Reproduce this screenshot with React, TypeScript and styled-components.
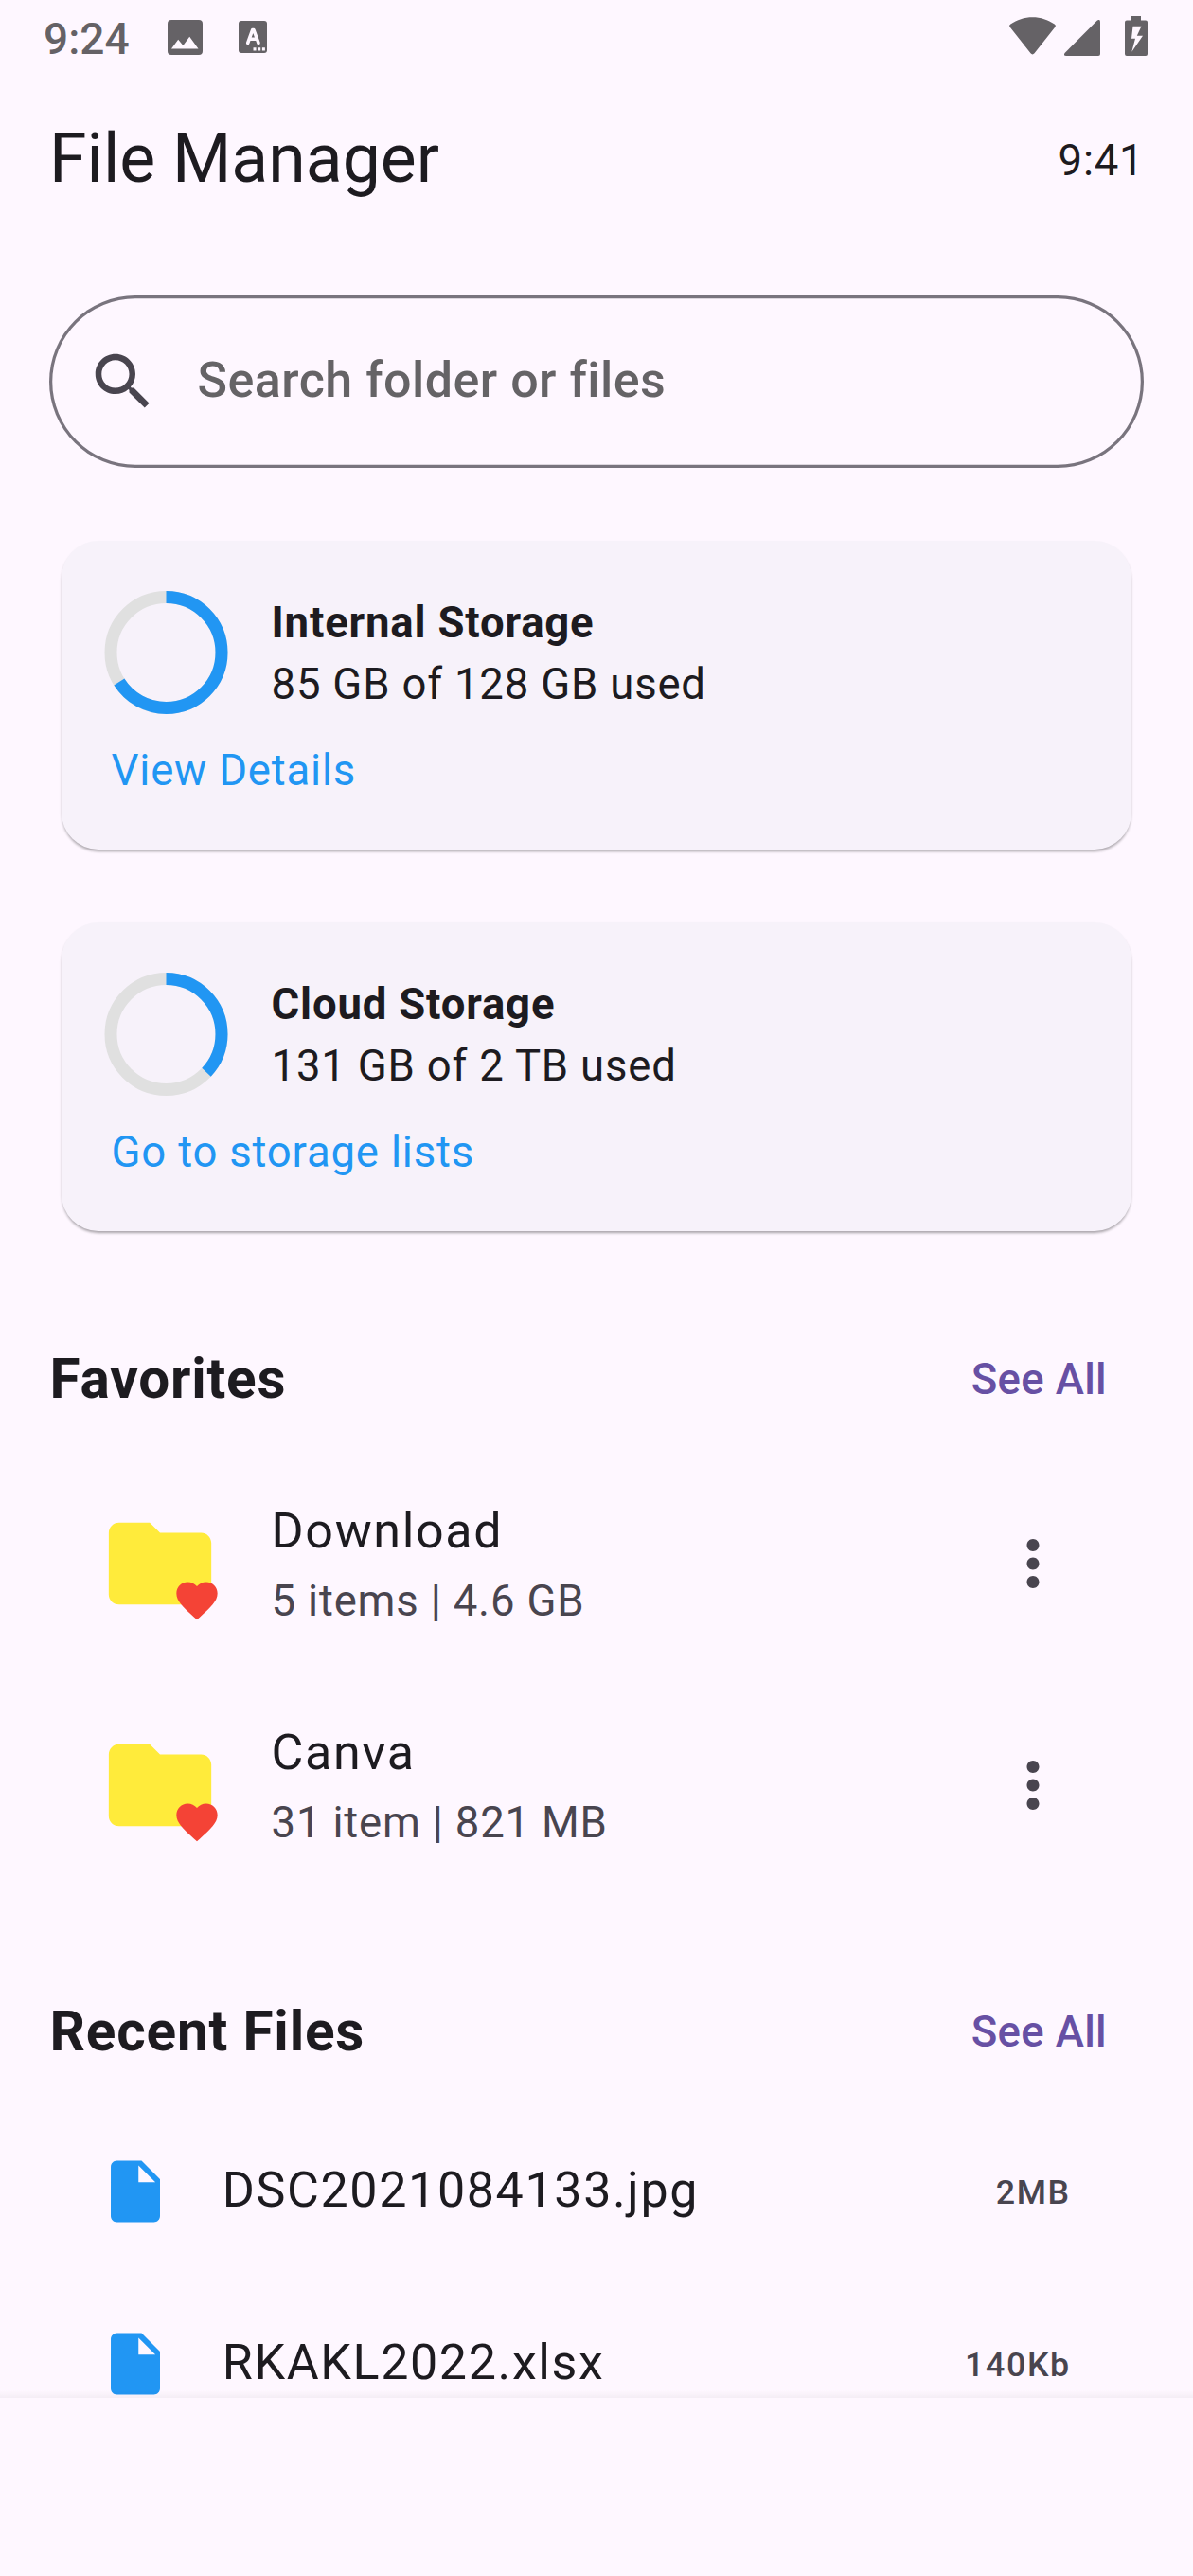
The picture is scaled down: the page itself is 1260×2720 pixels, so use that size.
import React from 'react';
import styled, { createGlobalStyle } from 'styled-components';

const GlobalStyle = createGlobalStyle`
  *, *::before, *::after { box-sizing: border-box; }
  html, body { margin: 0; padding: 0; background: #fef7ff; }
  body { font-family: Roboto, "Noto Sans", sans-serif; color: #1d1b20; }
  svg { display: block; flex: none; }
`;

const Screen = styled.div`
  width: 1260px;
  height: 2720px;
  display: flex;
  flex-direction: column;
  overflow: hidden;
  background: #fef7ff;
`;

const StatusBar = styled.header`
  height: 76px;
  flex: none;
  display: flex;
  justify-content: space-between;
  padding: 15px 48px 0 46px;
  color: #656266;
`;

const StatusGroup = styled.div`
  display: flex;
  align-items: flex-start;
`;

const Clock = styled.span`
  width: 131px;
  font-size: 46px;
  line-height: 53px;
  font-weight: 500;
`;

const StatusIcon = styled.svg<{ $top: number; $left?: number }>`
  margin-top: ${(p) => p.$top}px;
  margin-left: ${(p) => p.$left ?? 0}px;
`;

const AppBar = styled.div`
  height: 183px;
  flex: none;
  display: flex;
  align-items: center;
  justify-content: space-between;
  padding: 0 52px;
`;

const Title = styled.h1`
  margin: 0;
  font-size: 71.5px;
  line-height: 83px;
  font-weight: 400;
`;

const AppBarTime = styled.span`
  margin: 4px -0.5px 0 0;
  font-size: 45.5px;
  line-height: 53px;
  letter-spacing: 0.8125px;
`;

const Body = styled.main`
  flex: 1;
  min-height: 0;
  overflow: hidden;
  display: flex;
  flex-direction: column;
  padding: 53px 52px 0;
`;

const SearchBox = styled.label`
  height: 182px;
  flex: none;
  display: flex;
  align-items: center;
  gap: 39px;
  padding: 0 39px;
  border-radius: 91px;
  box-shadow: inset 0 0 0 3.25px #79747e;
  color: #49454f;
`;

const SearchHint = styled.span`
  margin-bottom: 3px;
  padding-left: 0.5px;
  font-size: 52px;
  line-height: 61px;
  font-weight: 500;
  letter-spacing: 0.4875px;
  color: #656366;
`;

const Cards = styled.div`
  flex: none;
  display: flex;
  flex-direction: column;
  gap: 77px;
  margin: 77px 13px 78px;
`;

const Card = styled.section`
  height: 326px;
  padding: 53px 45px 0;
  border-radius: 39px;
  background: #f7f2fa;
  box-shadow: 0 3px 3px -1px rgba(0, 0, 0, 0.26), 0 2px 3px rgba(0, 0, 0, 0.1);
`;

const CardTop = styled.div`
  display: flex;
  gap: 45px;
`;

const CardText = styled.div`
  display: flex;
  flex-direction: column;
  padding: 1px 0 0 0.5px;
`;

const CardLine = styled.span<{ $bold?: boolean }>`
  font-size: 45.5px;
  line-height: 65px;
  letter-spacing: 0.8125px;
  font-weight: ${(p) => (p.$bold ? 700 : 400)};
`;

const CardLink = styled.a`
  display: block;
  margin: 26px 0 0 7.5px;
  font-size: 45.5px;
  line-height: 65px;
  letter-spacing: 0.8125px;
  color: #2196f3;
`;

const SectionHeader = styled.div<{ $gap?: number }>`
  height: 156px;
  flex: none;
  display: flex;
  align-items: center;
  justify-content: space-between;
  margin-top: ${(p) => p.$gap ?? 0}px;
`;

const SectionTitle = styled.h2`
  margin: 0;
  padding-left: 0.5px;
  font-size: 58.5px;
  line-height: 68px;
  font-weight: 700;
  letter-spacing: 0.8125px;
`;

const SeeAll = styled.button`
  margin: 1px 0 0;
  padding: 0 39px;
  border: 0;
  background: none;
  font-family: inherit;
  font-size: 45.5px;
  line-height: 53px;
  font-weight: 500;
  letter-spacing: 0.325px;
  color: #6750a4;
`;

const FolderRow = styled.div`
  height: 234px;
  flex: none;
  display: flex;
  align-items: center;
  padding: 0 78px 0 52px;
  color: #49454f;
`;

const FolderIcon = styled.div`
  position: relative;
  flex: none;
  color: #ffeb3b;
`;

const HeartBadge = styled.svg`
  position: absolute;
  right: 0;
  bottom: 0;
  color: #f44336;
`;

const FolderText = styled.div`
  flex: 1;
  align-self: flex-start;
  display: flex;
  flex-direction: column;
  gap: 2px;
  padding: 43px 0 0 52.6px;
`;

const FolderName = styled.span`
  font-size: 52px;
  line-height: 79px;
  letter-spacing: 1.625px;
  color: #1d1b20;
`;

const FolderMeta = styled.span`
  font-size: 45.5px;
  line-height: 65px;
  letter-spacing: 0.8125px;
`;

const FileRow = styled.div`
  height: 182px;
  flex: none;
  display: flex;
  align-items: center;
  padding: 0 77.2px 0 52px;
  color: #2196f3;
`;

const FileName = styled.span`
  flex: 1;
  margin: 0 0 3px 52.8px;
  font-size: 52px;
  line-height: 61px;
  letter-spacing: 1.625px;
  color: #1d1b20;
`;

const FileSize = styled.span`
  margin-top: 2px;
  font-size: 35.75px;
  line-height: 42px;
  font-weight: 500;
  letter-spacing: 1.625px;
  color: #49454f;
`;

const BottomBar = styled.footer`
  position: relative;
  height: 188px;
  flex: none;
  background: #fef7ff;

  &::before {
    content: '';
    position: absolute;
    left: 0;
    right: 0;
    bottom: 100%;
    height: 8px;
    background: linear-gradient(rgba(0, 0, 0, 0), rgba(0, 0, 0, 0.04));
  }
`;

function Glyph({ d, size }: { d: string; size: number }) {
  return (
    <svg width={size} height={size} viewBox="0 0 24 24" fill="currentColor">
      <path d={d} />
    </svg>
  );
}

const SEARCH =
  'M15.5 14h-.79l-.28-.27C15.41 12.59 16 11.11 16 9.5 16 5.91 13.09 3 9.5 3S3 5.91 3 9.5 5.91 16 9.5 16c1.61 0 3.09-.59 4.23-1.57l.27.28v.79l5 4.99L20.49 19l-4.99-5zm-6 0C7.01 14 5 11.99 5 9.5S7.01 5 9.5 5 14 7.01 14 9.5 11.99 14 9.5 14z';
const FOLDER =
  'M10 4H4c-1.1 0-1.99.9-1.99 2L2 18c0 1.1.9 2 2 2h16c1.1 0 2-.9 2-2V8c0-1.1-.9-2-2-2h-8l-2-2z';
const HEART =
  'M12 21.35l-1.45-1.32C5.4 15.36 2 12.28 2 8.5 2 5.42 4.42 3 7.5 3c1.74 0 3.41.81 4.5 2.09C13.09 3.81 14.76 3 16.5 3 19.58 3 22 5.42 22 8.5c0 3.78-3.4 6.86-8.55 11.54L12 21.35z';
const MORE =
  'M12 8c1.1 0 2-.9 2-2s-.9-2-2-2-2 .9-2 2 .9 2 2 2zm0 2c-1.1 0-2 .9-2 2s.9 2 2 2 2-.9 2-2-.9-2-2-2zm0 6c-1.1 0-2 .9-2 2s.9 2 2 2 2-.9 2-2-.9-2-2-2z';
const FILE =
  'M6 2c-1.1 0-1.99.9-1.99 2L4 20c0 1.1.89 2 1.99 2H18c1.1 0 2-.9 2-2V8l-6-6H6zm7 7V3.5L18.5 9H13z';

function Ring({ value }: { value: number }) {
  const r = 58.5;
  const length = 2 * Math.PI * r;
  return (
    <svg width="131" height="130" viewBox="0 0 131 130" fill="none" strokeWidth="13">
      <circle cx="65.5" cy="65" r={r} stroke="#e0e0e0" />
      <circle
        cx="65.5"
        cy="65"
        r={r}
        stroke="#2196f3"
        strokeDasharray={`${length * value} ${length}`}
        transform="rotate(-90 65.5 65)"
      />
    </svg>
  );
}

const storages = [
  { name: 'Internal Storage', usage: '85 GB of 128 GB used', link: 'View Details', value: 0.66 },
  { name: 'Cloud Storage', usage: '131 GB of 2 TB used', link: 'Go to storage lists', value: 0.37 },
];

const folders = [
  { name: 'Download', meta: '5 items | 4.6 GB' },
  { name: 'Canva', meta: '31 item | 821 MB' },
];

const files = [
  { name: 'DSC2021084133.jpg', size: '2MB' },
  { name: 'RKAKL2022.xlsx', size: '140Kb' },
];

export default function App() {
  return (
    <>
      <GlobalStyle />
      <Screen>
        <StatusBar>
          <StatusGroup>
            <Clock>9:24</Clock>
            <StatusIcon $top={6} width="37" height="37" viewBox="0 0 37 37">
              <path
                fill="currentColor"
                fillRule="evenodd"
                d="M4 0h29a4 4 0 0 1 4 4v29a4 4 0 0 1-4 4H4a4 4 0 0 1-4-4V4a4 4 0 0 1 4-4zM4 30.400h28.500L23.200 17.800l-6.800 9.300-5.200-6.300z"
              />
            </StatusIcon>
            <StatusIcon $top={7} $left={38} width="30" height="34" viewBox="0 0 30 34">
              <rect width="30" height="34" rx="3" fill="currentColor" />
              <path
                d="M9.700 23.300 14.700 9.500h1.200L21 23.300M11.800 19.200h7"
                fill="none"
                stroke="#fef7ff"
                strokeWidth="3.600"
                strokeLinecap="round"
                strokeLinejoin="round"
              />
              <path d="M15.500 28.200h3v3.200h-3zM20.200 28.200h3v3.200h-3zM24.900 28.200h3v3.200h-3z" fill="#fef7ff" />
            </StatusIcon>
          </StatusGroup>
          <StatusGroup>
            <StatusIcon $top={3} width="49" height="40" viewBox="0 0 49 40" fill="currentColor">
              <path d="M.8 10.800Q-.7 8.900 1.300 7.500C8 2.800 16 .2 24.500.2S41 2.800 47.700 7.500Q49.700 8.900 48.200 10.800L26.500 38.300Q24.500 40.600 22.500 38.300z" />
            </StatusIcon>
            <StatusIcon $top={6} $left={9} width="38" height="38" viewBox="0 0 38 38" fill="currentColor">
              <path d="M34.700.8Q38-1.500 38 2.300V36q0 2-2 2H2.200Q-1.500 38 .8 34.700z" />
            </StatusIcon>
            <StatusIcon $top={2} $left={26} width="24" height="42" viewBox="0 0 24 42" fill="currentColor">
              <path
                fillRule="evenodd"
                d="M7 0h10v4.500h5a2 2 0 0 1 2 2V40a2 2 0 0 1-2 2H2a2 2 0 0 1-2-2V6.500a2 2 0 0 1 2-2h5zM8.500 10.700 7 23.700h4L7.300 37.800 19 20.700h-6.200l4.700-10z"
              />
            </StatusIcon>
          </StatusGroup>
        </StatusBar>
        <AppBar>
          <Title>File Manager</Title>
          <AppBarTime>9:41</AppBarTime>
        </AppBar>
        <Body>
          <SearchBox>
            <Glyph d={SEARCH} size={78} />
            <SearchHint>Search folder or files</SearchHint>
          </SearchBox>
          <Cards>
            {storages.map((s) => (
              <Card key={s.name}>
                <CardTop>
                  <Ring value={s.value} />
                  <CardText>
                    <CardLine $bold>{s.name}</CardLine>
                    <CardLine>{s.usage}</CardLine>
                  </CardText>
                </CardTop>
                <CardLink>{s.link}</CardLink>
              </Card>
            ))}
          </Cards>
          <SectionHeader>
            <SectionTitle>Favorites</SectionTitle>
            <SeeAll>See All</SeeAll>
          </SectionHeader>
          {folders.map((f) => (
            <FolderRow key={f.name}>
              <FolderIcon>
                <Glyph d={FOLDER} size={130} />
                <HeartBadge width="52" height="52" viewBox="0 0 24 24" fill="currentColor">
                  <path d={HEART} />
                </HeartBadge>
              </FolderIcon>
              <FolderText>
                <FolderName>{f.name}</FolderName>
                <FolderMeta>{f.meta}</FolderMeta>
              </FolderText>
              <Glyph d={MORE} size={78} />
            </FolderRow>
          ))}
          <SectionHeader $gap={65}>
            <SectionTitle>Recent Files</SectionTitle>
            <SeeAll>See All</SeeAll>
          </SectionHeader>
          {files.map((f) => (
            <FileRow key={f.name}>
              <Glyph d={FILE} size={78} />
              <FileName>{f.name}</FileName>
              <FileSize>{f.size}</FileSize>
            </FileRow>
          ))}
        </Body>
        <BottomBar />
      </Screen>
    </>
  );
}
